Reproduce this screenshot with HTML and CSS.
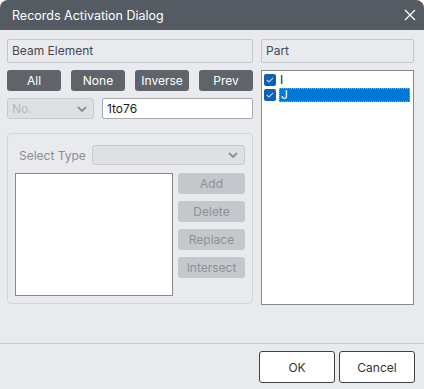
FILE: index.html
```html
<!DOCTYPE html>
<html lang="en">
<head>
    <meta charset="UTF-8">
    <title>Records Activation Dialog</title>
    <link rel="stylesheet" href="styles.css">
</head>
<body>
<div class="dialog">
    <div class="titlebar">
        <span class="title">Records Activation Dialog</span>
        <svg class="close" width="12" height="12" viewBox="0 0 12 12">
            <path d="M1 1L11 11M11 1L1 11" stroke="#ffffff" stroke-width="1.3" fill="none"/>
        </svg>
    </div>
    <div class="main">
        <div class="left">
            <div class="header">Beam Element</div>
            <div class="btn-row">
                <button class="btn-dark">All</button>
                <button class="btn-dark">None</button>
                <button class="btn-dark">Inverse</button>
                <button class="btn-dark">Prev</button>
            </div>
            <div class="range-row">
                <div class="combo combo-no">
                    <span>No.</span>
                    <svg width="10" height="6" viewBox="0 0 10 6"><path d="M1 1L5 5L9 1" stroke="#8a8e93" stroke-width="1.8" fill="none"/></svg>
                </div>
                <div class="text-input">1to76</div>
            </div>
            <div class="group">
                <div class="type-row">
                    <span class="type-label">Select Type</span>
                    <div class="combo combo-type">
                        <span></span>
                        <svg width="10" height="6" viewBox="0 0 10 6"><path d="M1 1L5 5L9 1" stroke="#8a8e93" stroke-width="1.8" fill="none"/></svg>
                    </div>
                </div>
                <div class="list-row">
                    <div class="listbox"></div>
                    <div class="side-btns">
                        <button class="btn-off">Add</button>
                        <button class="btn-off">Delete</button>
                        <button class="btn-off">Replace</button>
                        <button class="btn-off">Intersect</button>
                    </div>
                </div>
            </div>
        </div>
        <div class="right">
            <div class="header">Part</div>
            <div class="part-list">
                <div class="part-item">
                    <span class="check"><svg width="8" height="6" viewBox="0 0 8 6"><path d="M0.8 3L3 5L7.2 0.8" stroke="#b9d3ee" stroke-width="1.1" fill="none"/></svg></span>
                    <span class="part-name">I</span>
                </div>
                <div class="part-item">
                    <span class="check"><svg width="8" height="6" viewBox="0 0 8 6"><path d="M0.8 3L3 5L7.2 0.8" stroke="#b9d3ee" stroke-width="1.1" fill="none"/></svg></span>
                    <span class="part-name selected">J</span>
                </div>
            </div>
        </div>
    </div>
    <div class="footer">
        <button class="btn-light">OK</button>
        <button class="btn-light">Cancel</button>
    </div>
</div>
</body>
</html>
```
FILE: styles.css
```css
html{
    height: 100%;
}
body{
    margin: 0;
    padding: 0;
    background-color: #ffffff;
    font-family: "Inter", "Liberation Sans", sans-serif;
    font-size: 12px;
}
.dialog{
    display: flex;
    flex-direction: column;
    width: 424px;
    height: 389px;
    background-color: #e9eaed;
    border-radius: 8px 8px 0 0;
    overflow: hidden;
}
.titlebar{
    display: flex;
    align-items: center;
    justify-content: space-between;
    height: 30px;
    padding: 0 8px 0 12px;
    background-color: #555b62;
    color: #ffffff;
    flex-shrink: 0;
}
.title{
    font-size: 12.5px;
}
.main{
    display: flex;
    gap: 8px;
    padding: 9px 10px 0 7px;
}
.left{
    display: flex;
    flex-direction: column;
    width: 246px;
}
.right{
    display: flex;
    flex-direction: column;
    width: 153px;
}
.header{
    box-sizing: border-box;
    height: 24px;
    padding: 0 4px;
    line-height: 22px;
    border: 1px solid #c5c7cb;
    border-radius: 2px;
    color: #45494e;
}
.btn-row{
    display: flex;
    justify-content: space-between;
    margin-top: 7px;
    padding-right: 0;
}
button{
    font-family: "Inter", "Liberation Sans", sans-serif;
    font-size: 12px;
    cursor: pointer;
    padding: 0;
}
.btn-dark{
    width: 54px;
    height: 21px;
    border: none;
    border-radius: 3px;
    background-color: #5f646b;
    color: #ffffff;
}
.range-row{
    display: flex;
    gap: 8px;
    margin-top: 7px;
}
.combo{
    box-sizing: border-box;
    display: flex;
    align-items: center;
    justify-content: space-between;
    padding: 0 6px 0 4px;
    border: 1px solid #c8cacd;
    border-radius: 3px;
    background-color: #dfe0e3;
    color: #b4b7bb;
}
.combo-no{
    width: 87px;
    height: 21px;
}
.text-input{
    box-sizing: border-box;
    flex: 1;
    height: 21px;
    padding: 0 4px;
    line-height: 19px;
    border: 1px solid #a8abaf;
    border-radius: 2px;
    background-color: #ffffff;
    color: #1b1b1b;
}
.group{
    box-sizing: border-box;
    height: 171px;
    margin-top: 14px;
    padding: 11px 7px 8px 7px;
    border: 1px solid #d3d5d8;
    border-radius: 4px;
}
.type-row{
    display: flex;
    align-items: center;
    justify-content: space-between;
}
.type-label{
    padding-left: 4px;
    color: #8a8e93;
}
.combo-type{
    width: 153px;
    height: 20px;
}
.list-row{
    display: flex;
    gap: 5px;
    margin-top: 8px;
}
.listbox{
    box-sizing: border-box;
    width: 161px;
    height: 123px;
    border: 1px solid #86898e;
    background-color: #ffffff;
}
.side-btns{
    display: flex;
    flex-direction: column;
    gap: 7px;
}
.btn-off{
    width: 67px;
    height: 21px;
    border: none;
    border-radius: 3px;
    background-color: #c4c8cd;
    color: #8d9196;
}
.part-list{
    box-sizing: border-box;
    height: 235px;
    margin-top: 7px;
    padding: 1px 3px 0 2px;
    border: 1px solid #86898e;
    background-color: #ffffff;
}
.part-item{
    display: flex;
    align-items: center;
    height: 15px;
    gap: 3px;
}
.check{
    display: flex;
    align-items: center;
    justify-content: center;
    width: 12px;
    height: 12px;
    border-radius: 2px;
    background-color: #0f5fb5;
}
.part-name{
    flex: 1;
    height: 14px;
    line-height: 14px;
    color: #1b1b1b;
    box-sizing: border-box;
    padding-left: 1px;
}
.selected{
    background-color: #0078d7;
    color: #ffffff;
    border: 1px dotted #f0a030;
    line-height: 12px;
}
.footer{
    display: flex;
    justify-content: flex-end;
    gap: 4px;
    margin-top: auto;
    height: 46px;
    padding: 7px 9px 0 0;
    box-sizing: border-box;
    border-top: 1px solid #c9cbce;
}
.btn-light{
    width: 76px;
    height: 32px;
    border: 1px solid #3f4246;
    border-radius: 3px;
    background-color: #ffffff;
    color: #333333;
}
```
